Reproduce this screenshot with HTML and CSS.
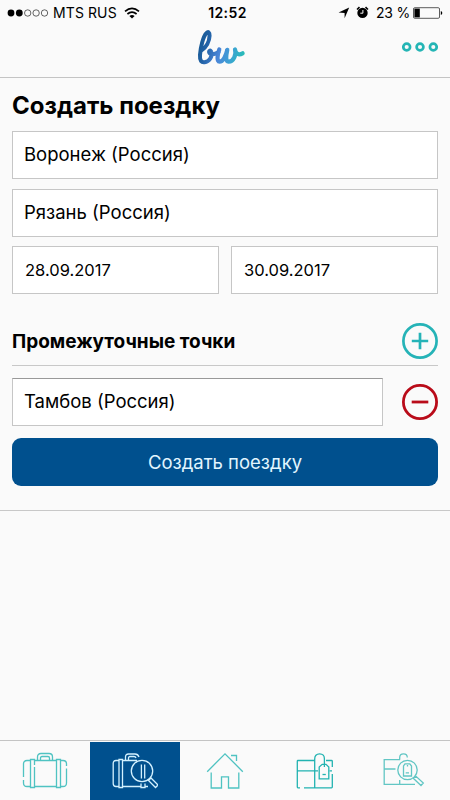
FILE: index.html
```html
<!DOCTYPE html>
<html lang="ru">
<head>
<meta charset="utf-8">
<meta name="viewport" content="width=device-width, initial-scale=1">
<link rel="stylesheet" href="styles.css">
<title>Создать поездку</title>
</head>
<body>

<header class="header">
    <div class="statusbar">
        <div class="status-left">
            <svg class="signal" width="42" height="8" viewBox="0 0 42 8">
                <circle cx="4" cy="4" r="3.4" fill="#000"/>
                <circle cx="12.3" cy="4" r="3.4" fill="#000"/>
                <g fill="none" stroke="#222" stroke-width=".7">
                    <circle cx="20.7" cy="4" r="3.2"/>
                    <circle cx="29.1" cy="4" r="3.2"/>
                    <circle cx="37.5" cy="4" r="3.2"/>
                </g>
            </svg>
            <span class="carrier">MTS RUS</span>
            <svg class="wifi" width="16" height="12" viewBox="0 0 16 12">
                <g fill="none" stroke="#000" stroke-width="1.7">
                    <path d="M1 4.4Q8-1.6 15 4.4"/>
                    <path d="M3.4 7Q8 3.2 12.6 7"/>
                </g>
                <path d="M5.4 8.9Q8 6.9 10.6 8.9L8 11.6Z"/>
            </svg>
        </div>
        <span class="clock">12:52</span>
        <div class="status-right">
            <svg class="location" width="12" height="12" viewBox="0 0 12 12"><path d="M11.2.6L6.6 11.3V5.9L.6 5.5Z"/></svg>
            <svg class="alarm" width="13" height="13" viewBox="0 0 13 13">
                <circle cx="6.5" cy="6.9" r="5.2"/>
                <path d="M1 3.5L3.5 1.2M12 3.5L9.5 1.2" stroke="#000" stroke-width="1.6"/>
                <path d="M6.9 4V7.2H4.3" fill="none" stroke="#fafafa" stroke-width="1"/>
            </svg>
            <span class="percent">23 %</span>
            <svg class="battery" width="30" height="12" viewBox="0 0 30 12">
                <rect x=".5" y=".7" width="26" height="10.6" rx="1.3" fill="none" stroke="#333" stroke-width=".8"/>
                <rect x="1.4" y="1.6" width="5.4" height="8.8"/>
                <path d="M27.8 4Q29.3 4.3 29.3 6T27.8 8Z"/>
            </svg>
        </div>
    </div>
    <div class="topbar">
        <svg class="logo" width="50" height="38" viewBox="0 0 50 38">
            <defs>
                <linearGradient id="brand" gradientUnits="userSpaceOnUse" x1="1" y1="10" x2="48" y2="24">
                    <stop offset="0" stop-color="#14568f"/>
                    <stop offset=".22" stop-color="#2363a8"/>
                    <stop offset=".5" stop-color="#4a86d8"/>
                    <stop offset=".75" stop-color="#3ca3d3"/>
                    <stop offset="1" stop-color="#27bdb5"/>
                </linearGradient>
            </defs>
            <g fill="none" stroke="url(#brand)" stroke-linecap="round" stroke-linejoin="round">
                <path stroke-width="4" d="M4 21.8C9.5 18.5 12.4 12 12.6 6.6C12.7 3 11.2 2.3 9.4 4.2C6.2 7.4 3.6 18 3 26C2.6 31.8 4.6 33.7 7.6 33.2C12.3 32.4 15.6 27.5 14.4 23.2C13.8 20.6 11.6 21.4 12.2 23.6C13.2 26 16.8 26 21.4 23.2"/>
                <path stroke-width="4.2" d="M22.3 20.5C20.6 25 19.3 32.6 22.6 32.6C26 32.6 29 27 30.3 20.8C29 26.7 28.4 32.4 31.5 32.6C36.6 32.8 39.6 25.5 38 20.5C38.6 25.3 42 26.3 45.6 24.3"/>
            </g>
        </svg>
        <svg class="more" width="36" height="10" viewBox="0 0 36 10">
            <g fill="none" stroke="#24b5b5" stroke-width="2.7">
                <circle cx="4.7" cy="5" r="3.4"/>
                <circle cx="18" cy="5" r="3.4"/>
                <circle cx="31.3" cy="5" r="3.4"/>
            </g>
        </svg>
    </div>
</header>

<main class="trip-form">
    <h1 class="title">Создать поездку</h1>
    <div class="field">Воронеж (Россия)</div>
    <div class="field">Рязань (Россия)</div>
    <div class="dates">
        <div class="field field-date">28.09.2017</div>
        <div class="field field-date">30.09.2017</div>
    </div>
    <div class="points-head">
        <h2 class="subtitle">Промежуточные точки</h2>
        <svg class="add" width="36" height="36" viewBox="0 0 36 36">
            <g fill="none" stroke="#25b3b7" stroke-width="2.7">
                <circle cx="18" cy="18" r="16.6"/>
                <path d="M18 9.8V26.2M9.8 18H26.2"/>
            </g>
        </svg>
    </div>
    <div class="point">
        <div class="field field-point">Тамбов (Россия)</div>
        <svg class="remove" width="36" height="36" viewBox="0 0 36 36">
            <g fill="none" stroke="#b90b19" stroke-width="2.8">
                <circle cx="18" cy="18" r="16.6"/>
                <path d="M9.7 18H26.3"/>
            </g>
        </svg>
    </div>
    <button class="submit">Создать поездку</button>
</main>

<nav class="tabbar">
    <a class="tab">
        <svg width="46" height="38" viewBox="0 0 46 38">
            <path d="M8 8.5H5Q1.5 8.5 1.5 12V25M1.5 28V31Q1.5 34.5 5 34.5H8M12.5 8.5H34M12.5 34.5H34M38.5 8.5H41Q44.5 8.5 44.5 12V14M44.5 16.5V31Q44.5 34.5 41 34.5H38.5"/>
            <path d="M12.5 13V7.5H8.5V35.5H12.5V15M34.5 7.5H38.5V35.5H34.5Z"/>
            <path d="M15.5 8V5Q15.5 1.5 19 1.5H27Q30.5 1.5 30.5 5V8M18.5 8V6Q18.5 4.5 20 4.5H26Q27.5 4.5 27.5 6V8"/>
        </svg>
    </a>
    <a class="tab tab-active">
        <svg width="46" height="38" viewBox="0 0 46 38">
            <path d="M7 8.5H4Q1.2 8.5 1.2 11.5V31.5Q1.2 34.5 4 34.5H7M10.5 8.5H25M10.5 34.5H29M33 34.5H36"/>
            <path d="M7 7.5H10.5V35.5H7ZM29 31.5V35.5H33V31.5"/>
            <path d="M13.5 8V5Q13.5 2 16.5 2H23Q26 2 27 5M16.5 8V6Q16.5 4.5 18 4.5H22Q23.5 4.5 24 6"/>
            <circle cx="30" cy="19" r="10.7"/>
            <path d="M29.4 12.5V26.5M32.7 12.5V26.5M36.5 28.5L39 26L46 33L43.5 35.5Z"/>
        </svg>
    </a>
    <a class="tab">
        <svg width="46" height="38" viewBox="0 0 46 38">
            <path d="M5.2 19.7L23 1.8L40.8 19.7M29 3.5H34.5V9M9.2 20.5V36H19.5V24.8H26.5V36H36.8V20.5"/>
        </svg>
    </a>
    <a class="tab">
        <svg class="deep" width="46" height="38" viewBox="0 0 46 38">
            <path d="M22.5 8.5H6Q5.3 8.5 5.3 9.3V35Q5.3 35.8 6 35.8H8M12 35.8H39.5Q40.3 35.8 40.3 35V22M40.3 15V9.3Q40.3 8.5 39.5 8.5H34M5.3 18.8H26M37.5 18.8H40M22.7 35.8V7Q22.7 1.8 27.6 1.8T32.4 7V15"/>
            <path d="M30.2 12.3H34L36.8 15V26.8H27.2V15Z"/>
            <path d="M30.5 22.5H33.8"/>
        </svg>
    </a>
    <a class="tab">
        <svg class="pale" width="46" height="38" viewBox="0 0 46 38">
            <path d="M18 7.7H2.2V32.3H17M2.2 17H13.5M17.7 7.7V5.5Q17.7 1.8 21.5 1.8T25.3 5.5M17.7 28V32.3H33"/>
            <circle cx="25.5" cy="18" r="9.7"/>
            <path d="M23 11.8H27.8L29.5 14V24H21.5V14ZM23.7 20.8H27M25.5 13V14.5M31.5 26.5L34 24.3L41.3 31L39 33.5Z"/>
        </svg>
    </a>
</nav>

</body>
</html>
```
FILE: styles.css
```css
* {
    box-sizing: border-box;
}

body {
    margin: 0;
    height: 800px;
    display: flex;
    flex-direction: column;
    overflow: hidden;
    background-color: #fafafa;
    color: #000;
    font-family: Inter, "Liberation Sans", sans-serif;
}

svg {
    display: block;
    flex: none;
}

.header {
    height: 78px;
    border-bottom: 1px solid #c4c4c4;
}

/* Status bar */
.statusbar {
    height: 25px;
    display: grid;
    grid-template-columns: 1fr auto 1fr;
    align-items: center;
    padding: 0 7px;
    font-size: 14px;
    line-height: 25px;
}

.status-left,
.status-right {
    display: flex;
    align-items: center;
}

.status-right {
    justify-content: flex-end;
}

.carrier {
    margin-left: 4px;
    letter-spacing: 0.1px;
}

.wifi {
    margin-left: 7px;
}

.clock {
    padding-left: 5px;
    font-weight: 600;
    letter-spacing: 0.4px;
}

.alarm {
    margin-left: 6px;
}

.percent {
    margin: 0 3px 0 7px;
    letter-spacing: -0.2px;
}

.topbar {
    height: 52px;
    display: grid;
    grid-template-columns: 1fr auto 1fr;
    align-items: center;
    padding: 0 12px;
}

.logo {
    grid-column: 2;
    margin: -6px 7px 0 0;
}

.more {
    justify-self: end;
    margin-top: -8px;
}

/* Form */
.trip-form {
    padding: 11px 12px 24px;
    border-bottom: 1px solid #c8c8c8;
}

.title {
    margin: 0 0 8px;
    font-size: 24px;
    line-height: 34px;
    font-weight: 700;
}

.field {
    height: 48px;
    margin-bottom: 9.6px;
    padding-left: 11px;
    border: 1px solid #c6c6c6;
    background-color: #fff;
    font-size: 18.5px;
    line-height: 45px;
    white-space: nowrap;
}

.dates {
    display: flex;
    gap: 12px;
}

.field-date {
    flex: 1;
    margin-bottom: 0;
    padding-left: 12px;
    font-size: 16.5px;
    line-height: 47px;
}

.points-head {
    height: 43px;
    margin-top: 29px;
    display: flex;
    justify-content: space-between;
    border-bottom: 1px solid #c8c8c8;
}

.subtitle {
    margin: 0;
    font-size: 19px;
    line-height: 37px;
    font-weight: 700;
}

.point {
    display: flex;
    align-items: center;
    justify-content: space-between;
    margin: 12px 0;
}

.field-point {
    width: 371px;
    margin-bottom: 0;
    border-top-color: #999;
}

.submit {
    display: block;
    width: 100%;
    height: 48px;
    padding: 0;
    border: none;
    border-radius: 9px;
    background-color: #00508e;
    color: #e2f6ff;
    font-family: inherit;
    font-size: 18.5px;
}

/* Bottom tabs */
.tabbar {
    height: 60px;
    margin-top: auto;
    padding-top: 1px;
    display: flex;
    border-top: 1px solid #c4c4c4;
}

.tab {
    width: 90px;
    display: flex;
    align-items: center;
    justify-content: center;
}

.tab svg {
    fill: none;
    stroke: #4fc3c2;
    stroke-width: 1.3;
}

.tab .deep {
    stroke: #22b3b1;
}

.tab .pale {
    stroke: #62c6c4;
}

.tab-active {
    background-color: #00508e;
}

.tab-active svg {
    stroke: #d3f1ff;
}
```
